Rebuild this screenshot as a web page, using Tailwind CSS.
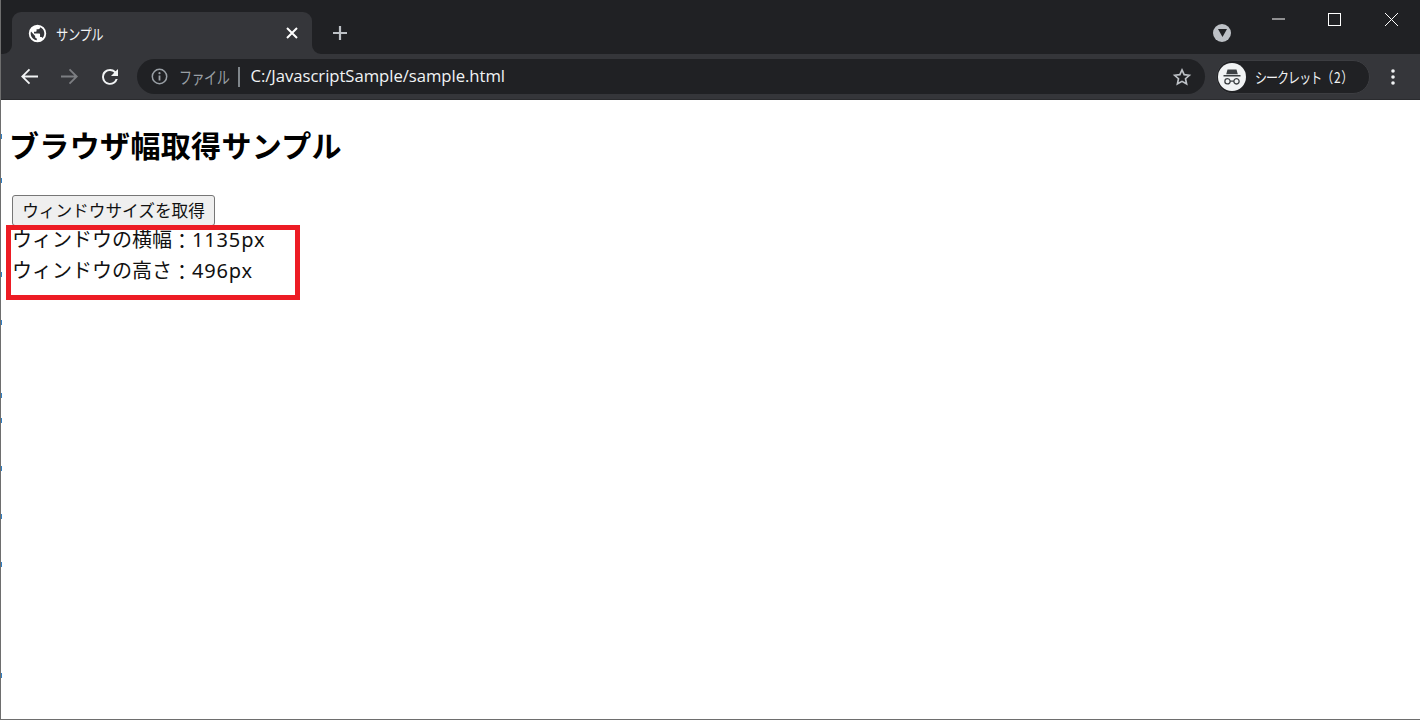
<!DOCTYPE html>
<html lang="ja">
<head>
<meta charset="utf-8">
<script src="https://cdn.jsdelivr.net/npm/@tailwindcss/browser@4"></script>
<title>サンプル</title>
</head>
<body class="bg-white overflow-hidden">
<div class="relative w-[1420px] h-[720px] flex flex-col border-l border-b border-[#6e6e6e] font-['Noto_Sans_CJK_JP','Noto_Sans',sans-serif] overflow-hidden">
  <!-- title bar -->
  <div class="h-[54px] bg-[#202124] flex items-end pl-[11px] shrink-0 relative">
    <div class="relative w-[300px] h-[42px] bg-[#35363a] rounded-t-[9px] flex items-center pl-[16px] pr-[14px]">
      <svg class="absolute left-[-9px] bottom-0 w-[9px] h-[9px]" viewBox="0 0 9 9" fill="#35363a"><path d="M9 0v9H0a9 9 0 0 0 9-9Z"/></svg>
      <svg class="absolute right-[-9px] bottom-0 w-[9px] h-[9px]" viewBox="0 0 9 9" fill="#35363a"><path d="M0 0v9h9a9 9 0 0 1-9-9Z"/></svg>
      <svg class="w-[19px] h-[19px] shrink-0" viewBox="0 0 24 24" fill="#fff"><path d="M12 1a11 11 0 1 0 0 22 11 11 0 0 0 0-22ZM3.400 12c0-.9.1-1.600.4-2.400L9 15v1.100c0 1.200 1 2.200 2.100 2.200v2.300C6.800 20 3.400 16.400 3.400 12Zm14.900 5.800c-.3-.9-1.100-1.500-2-1.500h-1.100V13a1 1 0 0 0-1-1H7.600V9.800h2.200a1 1 0 0 0 1-1V6.600H13c1.200 0 2.200-1 2.200-2.100V4a8.600 8.600 0 0 1 3.100 13.800Z"/></svg>
      <span class="ml-[9px] inline-block w-[46px] origin-left scale-x-[.82] text-[15px] leading-none text-[#f1f3f4] tracking-[-0.5px] whitespace-nowrap">サンプル</span>
      <svg class="ml-auto w-[12px] h-[12px]" viewBox="0 0 12 12" stroke="#fff" stroke-width="2"><path d="M1 1l10 10M11 1L1 11"/></svg>
    </div>
    <svg class="ml-[20px] mb-[13px] w-[16px] h-[16px]" viewBox="0 0 16 16" stroke="#bdc1c6" stroke-width="2.200"><path d="M8 1v14M1 8h14"/></svg>
    <!-- search-tabs button -->
    <div class="absolute left-[1212px] top-[24px] w-[18px] h-[18px] rounded-full bg-[#bdc1c6] flex items-center justify-center">
      <svg class="w-[9px] h-[8px]" viewBox="0 0 9 8" fill="#202124"><path d="M0 0h9L4.500 8Z"/></svg>
    </div>
    <!-- window controls -->
    <svg class="absolute left-[1271px] top-[18px] w-[13px] h-[2px]" viewBox="0 0 13 2"><path d="M0 1h13" stroke="#fff" stroke-width="1"/></svg>
    <svg class="absolute left-[1327px] top-[13px] w-[13px] h-[13px]" viewBox="0 0 13 13" fill="none" stroke="#fff"><rect x=".5" y=".5" width="12" height="12"/></svg>
    <svg class="absolute left-[1384px] top-[13px] w-[13px] h-[13px]" viewBox="0 0 13 13" fill="none" stroke="#fff"><path d="M0 0l13 13M13 0L0 13"/></svg>
  </div>
  <!-- toolbar -->
  <div class="h-[46px] bg-[#35363a] flex items-center shrink-0 border-b border-[#2a2b2e]">
    <svg class="ml-[20px] w-[17px] h-[17px] shrink-0" viewBox="0 0 16 16" fill="none" stroke="#f1f3f4" stroke-width="1.700"><path d="M16 8H1.500M8 1.200 1.200 8 8 14.800"/></svg>
    <svg class="ml-[23px] w-[17px] h-[17px] shrink-0" viewBox="0 0 16 16" fill="none" stroke="#7c7e82" stroke-width="1.700"><path d="M0 8h14.500M8 1.200 14.800 8 8 14.800"/></svg>
    <svg class="ml-[20px] w-[24px] h-[24px] shrink-0" viewBox="0 0 24 24" fill="#f1f3f4"><path d="M17.650 6.350A8 8 0 0 0 4 12a8 8 0 0 0 15.700 2h-2.100A6 6 0 1 1 12 6c1.700 0 3.100.7 4.200 1.800L13 11h7V4l-2.350 2.350Z"/></svg>
    <!-- omnibox -->
    <div class="ml-[15px] w-[1068px] h-[35px] rounded-full bg-[#202124] flex items-center pl-[14px] pr-[13px]">
      <svg class="w-[17px] h-[17px] shrink-0" viewBox="0 0 17 17" fill="none"><circle cx="8.500" cy="8.500" r="7.200" stroke="#9aa0a6" stroke-width="1.500"/><path d="M8.500 7.500v5" stroke="#9aa0a6" stroke-width="1.800"/><circle cx="8.500" cy="5.200" r="1.100" fill="#9aa0a6"/></svg>
      <span class="ml-[11px] inline-block w-[50px] origin-left scale-x-[.77] text-[17px] leading-none text-[#9aa0a6] tracking-[-0.7px] whitespace-nowrap">ファイル</span>
      <span class="ml-[9px] w-[1.500px] h-[20px] bg-[#80868b]"></span>
      <span class="ml-[11px] text-[16.700px] leading-none text-[#f1f3f4] font-['Open_Sans',sans-serif] tracking-[-0.05px]">C:/JavascriptSample/sample.html</span>
      <svg class="ml-auto w-[20px] h-[20px]" viewBox="0 0 24 24" fill="none" stroke="#bdc1c6" stroke-width="2"><path d="M12 3.500l2.600 5.700 6.200.7-4.600 4.200 1.300 6.100L12 17.200l-5.500 3 1.300-6.100-4.600-4.200 6.200-.7Z"/></svg>
    </div>
    <!-- profile pill -->
    <div class="ml-[11px] w-[154px] h-[34px] rounded-full bg-[#202124] border border-[#3c3d41] flex items-center">
      <div class="ml-[1px] w-[28px] h-[28px] rounded-full bg-[#f1f3f4] flex items-center justify-center shrink-0">
        <svg class="w-[22px] h-[22px]" viewBox="0 0 22 22" fill="#3c4043"><path d="M6.500 3.500h9l1.300 4.800H5.200Z"/><path d="M2.500 9h17v1.500h-17Z"/><path fill-rule="evenodd" d="M6.500 12a3.300 3.300 0 0 1 3.200 2.500h2.600a3.300 3.300 0 1 1-.1 1.300H9.800A3.300 3.300 0 1 1 6.500 12Zm0 1.300a2 2 0 1 0 0 4 2 2 0 0 0 0-4Zm9 0a2 2 0 1 0 0 4 2 2 0 0 0 0-4Z"/></svg>
      </div>
      <span class="ml-[9px] inline-block w-[94px] origin-left scale-x-[.8] text-[15px] leading-none text-[#f1f3f4] tracking-[-1.200px] whitespace-nowrap">シークレット<span class="tracking-[0.8px]">（2）</span></span>
    </div>
    <svg class="ml-[21px] w-[4px] h-[16px] shrink-0" viewBox="0 0 4 16" fill="#f1f3f4"><circle cx="2" cy="2" r="1.800"/><circle cx="2" cy="8" r="1.800"/><circle cx="2" cy="14" r="1.800"/></svg>
  </div>
  <!-- page -->
  <main class="flex-1 pl-[10px] text-black">
    <h1 class="mt-[22px] ml-[-2px] text-[30px] leading-[44px] font-bold tracking-[0.35px]">ブラウザ幅取得サンプル</h1>
    <button class="mt-[29px] ml-[1px] block w-[203px] h-[31px] bg-[#efefef] border border-[#767676] rounded-[3px] text-[16.670px] leading-none text-[#111]">ウィンドウサイズを取得</button>
    <div class="ml-[1px] mt-[-2px] text-[20px] leading-[30px] text-[#111]">ウィンドウの横幅<span class="inline-block translate-y-[2px]">：</span><span class="font-['Noto_Sans',sans-serif] tracking-[0.85px]">1135px</span></div>
    <div class="ml-[1px] text-[20px] leading-[30px] text-[#111]">ウィンドウの高さ<span class="inline-block translate-y-[2px]">：</span><span class="font-['Noto_Sans',sans-serif] tracking-[0.85px]">496px</span></div>
  </main>
  <!-- annotation -->
  <div class="absolute left-[5px] top-[225px] w-[294px] h-[75px] border-[5px] border-[#ed1c24]"></div>
  <!-- artefacts of the window behind, on the left edge -->
  <span class="absolute left-0 top-[134px] w-[1px] h-[5px] bg-[#2f7fc4]"></span>
  <span class="absolute left-0 top-[178px] w-[1px] h-[5px] bg-[#2f7fc4]"></span>
  <span class="absolute left-0 top-[272px] w-[1px] h-[5px] bg-[#2f7fc4]"></span>
  <span class="absolute left-0 top-[320px] w-[1px] h-[5px] bg-[#2f7fc4]"></span>
  <span class="absolute left-0 top-[393px] w-[1px] h-[5px] bg-[#2f7fc4]"></span>
  <span class="absolute left-0 top-[418px] w-[1px] h-[5px] bg-[#2f7fc4]"></span>
  <span class="absolute left-0 top-[466px] w-[1px] h-[5px] bg-[#2f7fc4]"></span>
  <span class="absolute left-0 top-[514px] w-[1px] h-[5px] bg-[#2f7fc4]"></span>
  <span class="absolute left-0 top-[562px] w-[1px] h-[5px] bg-[#2f7fc4]"></span>
  <span class="absolute left-0 top-[673px] w-[1px] h-[5px] bg-[#2f7fc4]"></span>
</div>
</body>
</html>
